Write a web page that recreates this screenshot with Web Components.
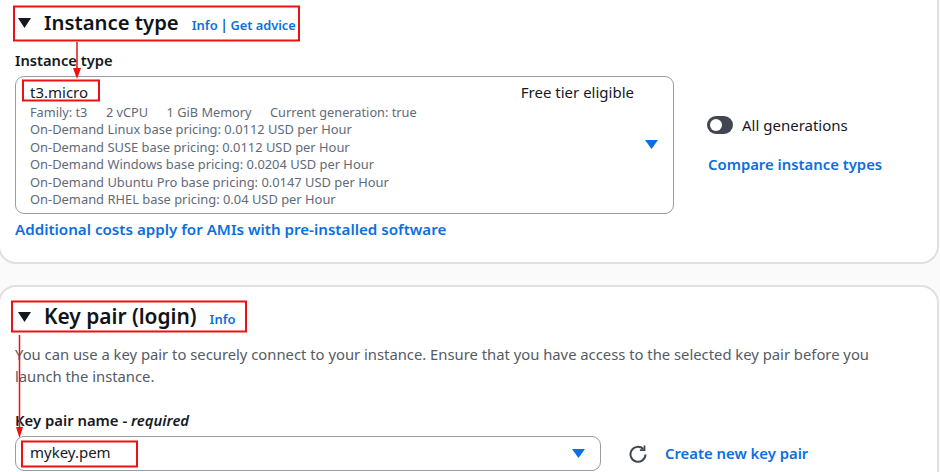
<!DOCTYPE html>
<html><head><meta charset="utf-8">
<style>
html,body{margin:0;padding:0;background:#fafafa;}
body{width:940px;height:472px;overflow:hidden;position:relative;font-family:"Noto Sans","Liberation Sans",sans-serif;color:#16191f;}
</style></head><body>
<aws-panel style="height:264px;padding-top:8px;border-top:0;border-radius:0 0 18px 18px">
  <aws-head info="Info" extra="Get advice" style="--t:20.300px">Instance type</aws-head>
  <div style="display:flex;margin-top:12px">
    <div style="width:659px;flex:none">
      <aws-label>Instance type</aws-label>
      <aws-select style="height:138px;padding-top:5px;margin-top:6px" chev="center">
        <aws-row>t3.micro<span slot="end">Free tier eligible</span></aws-row>
        <aws-meta style="margin-top:1.500px;font-size:12.750px"><span style="display:flex;gap:18.500px"><span>Family: t3</span><span>2 vCPU</span><span>1 GiB Memory</span><span>Current generation: true</span></span></aws-meta>
        <aws-meta>On-Demand Linux base pricing: 0.0112 USD per Hour</aws-meta>
        <aws-meta>On-Demand SUSE base pricing: 0.0112 USD per Hour</aws-meta>
        <aws-meta>On-Demand Windows base pricing: 0.0204 USD per Hour</aws-meta>
        <aws-meta>On-Demand Ubuntu Pro base pricing: 0.0147 USD per Hour</aws-meta>
        <aws-meta>On-Demand RHEL base pricing: 0.04 USD per Hour</aws-meta>
      </aws-select>
      <aws-link style="margin-top:5px;font-size:15.150px">Additional costs apply for AMIs with pre-installed software</aws-link>
    </div>
    <div style="margin:65px 0 0 34px;display:flex;flex-direction:column;gap:19px">
      <aws-toggle style="margin-left:-1px">All generations</aws-toggle>
      <aws-link>Compare instance types</aws-link>
    </div>
  </div>
</aws-panel>
<aws-panel style="margin-top:21px;height:187px;padding-top:15px;border-bottom:0;border-radius:18px 18px 0 0">
  <aws-head info="Info" style="--t:20.900px">Key pair (login)</aws-head>
  <aws-para style="margin-top:11px">You can use a key pair to securely connect to your instance. Ensure that you have access to the selected key pair before you launch the instance.</aws-para>
  <aws-label style="margin-top:23px;font-size:14.850px"><span>Key pair name - <i>required</i></span></aws-label>
  <div style="display:flex;align-items:center;margin-top:6px">
    <aws-select style="width:586px;height:35px;flex:none;padding-top:5px" chev="key">
      <aws-row>mykey.pem</aws-row>
    </aws-select>
    <svg width="18" height="18" viewBox="0 0 18 18" style="margin-left:28px;flex:none" fill="none" stroke="#414750" stroke-width="2"><path d="M14.300 4A7.500 7.500 0 1 0 16.500 9.500"/><path d="M15.500 .5v4.600h-4.600" stroke-width="1.800"/></svg>
    <aws-link style="margin-left:18px;margin-bottom:2px">Create new key pair</aws-link>
  </div>
</aws-panel>
<svg id="marks" width="940" height="472" style="position:absolute;left:0;top:0;pointer-events:none" fill="none" stroke="#ee1111" stroke-width="2">
  <rect x="14" y="6.500" width="285" height="34"/>
  <rect x="23" y="80.500" width="76" height="20"/>
  <rect x="12" y="301.500" width="234" height="30"/>
  <rect x="22" y="441.500" width="115" height="25"/>
  <path d="M77 42V70M19.500 335V429" stroke-width="1.500"/>
  <path d="M73 68h8l-4 11zM16 427h7l-3.500 11z" fill="#ee1111" stroke="none"/>
</svg>
<script>
function def(name,css,html,init){customElements.define(name,class extends HTMLElement{
  constructor(){super();const r=this.attachShadow({mode:'open'});r.innerHTML='<style>'+css+'</style>'+html;}
  connectedCallback(){if(init)init(this,this.shadowRoot);}
});}
def('aws-panel',':host{display:block;box-sizing:border-box;margin-left:-2px;width:941px;background:#fff;border:2px solid #dfe0e2;border-radius:18px;padding-left:15px}','<slot></slot>');
def('aws-head',':host{display:flex;align-items:baseline;height:30px;white-space:nowrap}svg{align-self:center;margin-left:3px;margin-right:13px;flex:none}.t{font-size:var(--t,20.500px);font-weight:600;color:#0f141a}.a{font-size:13px;font-weight:600;color:#0b6fe0;margin-left:13px}.s{font-size:14px;font-weight:600;color:#0b5cad;margin:0 2.500px}.b{font-size:12.800px;font-weight:600;color:#0b6fe0}',
 '<svg width="13" height="10" viewBox="0 0 13 10"><path d="M0 0h13L6.500 10z" fill="#14181f"/></svg><span class="t"><slot></slot></span><span class="a"></span><span class="s"></span><span class="b"></span>',
 (h,r)=>{r.querySelector('.a').textContent=h.getAttribute('info');const e=h.getAttribute('extra');if(e){r.querySelector('.s').textContent='|';r.querySelector('.b').textContent=e;}});
def('aws-label',':host{display:block;font-size:14.700px;font-weight:600;line-height:20px;color:#16191f}','<slot></slot>');
def('aws-select',':host{display:block;box-sizing:border-box;position:relative;background:#fff;border:1.500px solid #9a9ca3;border-radius:9px;padding-left:14px;padding-right:39px}.c{position:absolute;width:13px;height:9px}:host([chev=center]) .c{right:15px;top:63px}:host([chev=key]) .c{right:15px;top:12px}','<slot></slot><svg class="c" viewBox="0 0 13 9"><path d="M0 0h13L6.500 9z" fill="#0b6fe0"/></svg>');
def('aws-row',':host{display:flex;justify-content:space-between;font-size:15px;line-height:20px;color:#16191f;white-space:nowrap}','<span><slot></slot></span><span><slot name="end"></slot></span>');
def('aws-meta',':host{display:block;font-size:12.900px;line-height:17.500px;color:#5f6b7a;white-space:nowrap}','<slot></slot>');
def('aws-link',':host{display:block;font-size:14.850px;font-weight:600;line-height:20px;color:#0b6fe0;white-space:nowrap}','<slot></slot>');
def('aws-para',':host{display:block;width:866px;font-size:14.800px;line-height:22px;color:#545b64}','<slot></slot>');
def('aws-toggle',':host{display:flex;align-items:center;gap:9px;font-size:15px;line-height:20px;color:#16191f;white-space:nowrap}.t{width:26px;height:18px;box-sizing:border-box;border-radius:9px;background:#414750;position:relative;flex:none}.k{position:absolute;left:3px;top:3px;width:12px;height:12px;border-radius:50%;background:#fff}','<span class="t"><span class="k"></span></span><slot></slot>');
</script>
</body></html>
